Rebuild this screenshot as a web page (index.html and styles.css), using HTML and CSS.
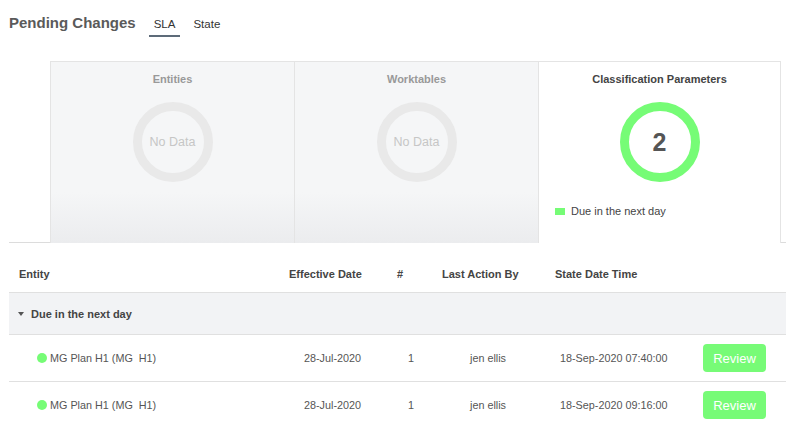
FILE: index.html
```html
<!DOCTYPE html>
<html>
<head>
<meta charset="utf-8">
<link rel="stylesheet" href="styles.css">
</head>
<body>
<div class="page">
  <div class="topbar">
    <h1 class="title">Pending Changes</h1>
    <div class="tabs">
      <span class="tab active">SLA</span>
      <span class="tab">State</span>
    </div>
  </div>

  <div class="charts">
    <div class="card empty">
      <div class="card-title">Entities</div>
      <div class="donut">
        <svg width="80" height="80" viewBox="0 0 80 80"><circle cx="40" cy="40" r="35.5" fill="none" stroke="#e9e9e9" stroke-width="9"/></svg>
        <span class="nodata">No Data</span>
      </div>
    </div>
    <div class="card empty">
      <div class="card-title">Worktables</div>
      <div class="donut">
        <svg width="80" height="80" viewBox="0 0 80 80"><circle cx="40" cy="40" r="35.5" fill="none" stroke="#e9e9e9" stroke-width="9"/></svg>
        <span class="nodata">No Data</span>
      </div>
    </div>
    <div class="card selected">
      <div class="card-title dark">Classification Parameters</div>
      <div class="donut">
        <svg width="80" height="80" viewBox="0 0 80 80"><circle cx="40" cy="40" r="35.5" fill="none" stroke="#76fc76" stroke-width="9"/></svg>
        <span class="count">2</span>
      </div>
      <div class="legend"><span class="swatch"></span>Due in the next day</div>
    </div>
  </div>

  <div class="table">
    <div class="row head">
      <div class="c1 h">Entity</div>
      <div class="c2 h">Effective Date</div>
      <div class="c3 h">#</div>
      <div class="c4 h">Last Action By</div>
      <div class="c5 h">State Date Time</div>
      <div class="c6"></div>
    </div>
    <div class="group"><span class="caret"></span>Due in the next day</div>
    <div class="row data">
      <div class="c1 entity"><span class="dot"></span>MG Plan H1 (MG&nbsp; H1)</div>
      <div class="c2 d-date">28-Jul-2020</div>
      <div class="c3 d-num">1</div>
      <div class="c4 d-user">jen ellis</div>
      <div class="c5 d-time">18-Sep-2020 07:40:00</div>
      <div class="c6"><button class="review">Review</button></div>
    </div>
    <div class="row data">
      <div class="c1 entity"><span class="dot"></span>MG Plan H1 (MG&nbsp; H1)</div>
      <div class="c2 d-date">28-Jul-2020</div>
      <div class="c3 d-num">1</div>
      <div class="c4 d-user">jen ellis</div>
      <div class="c5 d-time">18-Sep-2020 09:16:00</div>
      <div class="c6"><button class="review">Review</button></div>
    </div>
  </div>
</div>
</body>
</html>
```

FILE: styles.css
```css
* { box-sizing: border-box; }
html, body { margin: 0; padding: 0; background: #fff; }
body {
  font-family: "Liberation Sans", Arial, sans-serif;
  color: #555;
  overflow: hidden;
}
.page { padding-left: 9px; width: 786px; }

.topbar {
  display: flex;
  align-items: flex-start;
  height: 61px;
  padding-top: 14px;
}
.title {
  margin: 0;
  font-size: 15px;
  font-weight: bold;
  color: #5a5a5a;
  line-height: 18px;
}
.tabs { display: flex; margin-left: 13px; gap: 3px; }
.tab {
  font-size: 11.5px;
  color: #333;
  padding: 3px 5px 0;
  height: 23px;
  line-height: 14px;
  margin-right: 5px;
}
.tab.active { border-bottom: 2px solid #5d6b79; }

.charts {
  display: flex;
  padding-left: 41px;
  border-bottom: 1px solid #dcdcdc;
  height: 182px;
}
.card {
  width: 244px;
  height: 182px;
  border: 1px solid #e4e4e4;
  border-bottom: none;
  border-right: none;
  display: flex;
  flex-direction: column;
  align-items: center;
}
.card.empty { background: linear-gradient(#f5f6f7 0%, #f5f6f7 72%, #ebecee 100%); }
.card.selected {
  width: 243px;
  background: #fff;
  border-right: 1px solid #e4e4e4;
  height: 182px;
  margin-bottom: -1px;
  position: relative;
  align-items: flex-start;
}
.card-title {
  font-size: 11px;
  font-weight: bold;
  color: #999;
  margin-top: 11px;
  line-height: 13px;
  align-self: center;
}
.card-title.dark { color: #444; }
.donut {
  margin-top: 16px;
  width: 80px;
  height: 80px;
  position: relative;
  display: flex;
  align-items: center;
  justify-content: center;
  align-self: center;
}
.donut svg { position: absolute; left: 0; top: 0; }
.nodata { font-size: 12.5px; color: #c6c6c6; }
.count { font-size: 25px; font-weight: bold; color: #555; }
.legend {
  margin-top: 23px;
  margin-left: 16px;
  font-size: 11px;
  color: #444;
  display: flex;
  align-items: center;
}
.swatch {
  width: 10px;
  height: 7px;
  background: #76fc76;
  margin-right: 6px;
}

.table { margin-top: 19px; }
.row {
  display: grid;
  grid-template-columns: 270px 108px 45px 113px 145px 96px;
  align-items: center;
  border-bottom: 1px solid #e0e0e0;
}
.row.head { height: 31px; }
.row.data { height: 47px; font-size: 10.8px; color: #555; }
.h { font-size: 11px; font-weight: bold; color: #444; padding-left: 10px; padding-bottom: 7px; }
.group {
  height: 42px;
  background: #f2f3f5;
  border-bottom: 1px solid #e0e0e0;
  display: flex;
  align-items: center;
  padding-left: 9px;
  font-size: 11px;
  font-weight: bold;
  color: #444;
}
.caret {
  width: 0; height: 0;
  border-left: 3px solid transparent;
  border-right: 3px solid transparent;
  border-top: 4px solid #555;
  margin-right: 7px;
}
.entity { display: flex; align-items: center; padding-left: 28px; }
.dot {
  width: 10px; height: 10px;
  border-radius: 50%;
  background: #76fc76;
  margin-right: 3px;
}
.d-date { text-align: right; padding-right: 26px; }
.d-num { padding-left: 21px; }
.d-user { padding-left: 38px; }
.d-time { padding-left: 15px; }
.review {
  margin-left: 13px;
  width: 63px;
  height: 28px;
  border: none;
  border-radius: 4px;
  background: #77fb77;
  color: #fff;
  font-family: "Liberation Sans", Arial, sans-serif;
  font-size: 13px;
  padding: 0;
}
```
